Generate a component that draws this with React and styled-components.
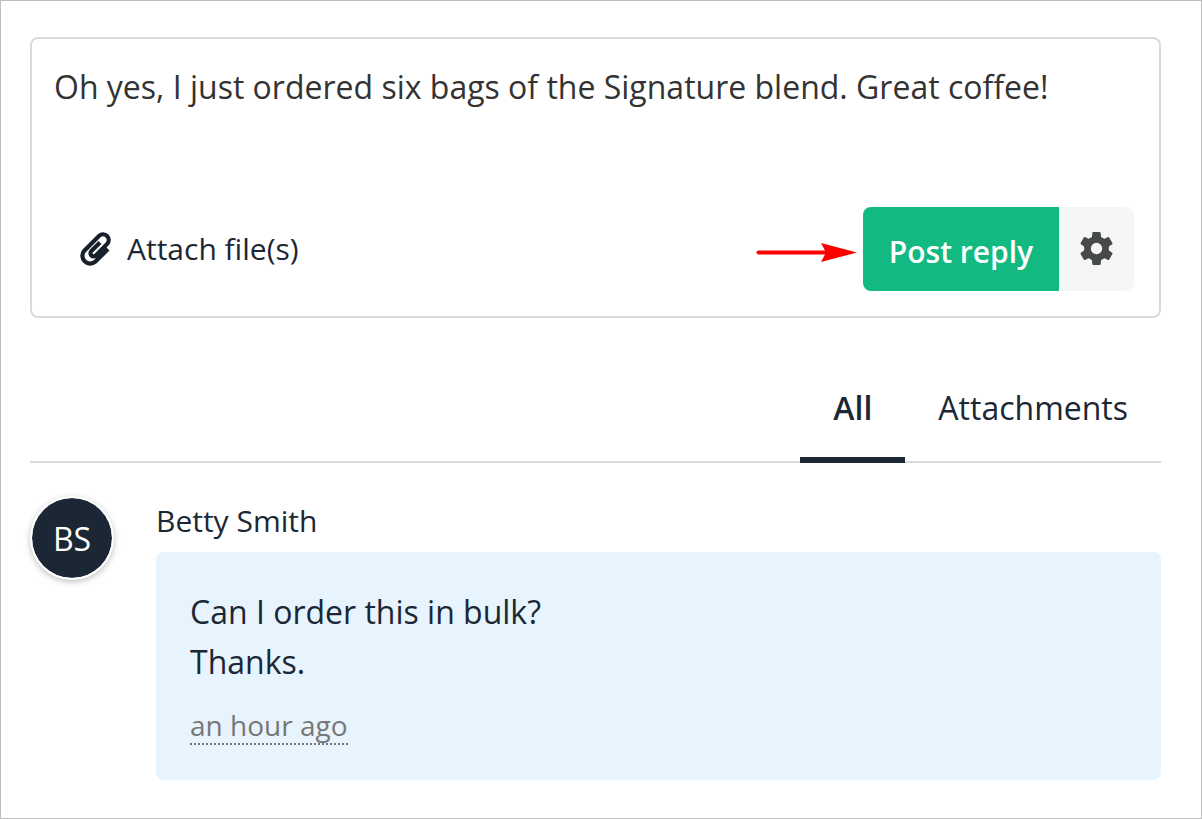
import React from "react";
import styled, { createGlobalStyle } from "styled-components";

const GlobalStyle = createGlobalStyle`
  *, *::before, *::after { box-sizing: border-box; }
  body {
    margin: 0;
    background: #fff;
    color: #1c2735;
    font-family: "Open Sans", "Noto Sans", sans-serif;
  }
  button, textarea { font: inherit; color: inherit; margin: 0; }
`;

const Page = styled.main`
  min-height: 100vh;
  padding: 36px 40px 38px 29px;
  border: 1px solid #bebebe;
`;

const Composer = styled.form`
  display: flex;
  flex-direction: column;
  border: 2px solid #dadada;
  border-radius: 8px;
`;

const ReplyBox = styled.textarea`
  display: block;
  width: 100%;
  height: 168px;
  padding: 23px 22px;
  border: 0;
  outline: 0;
  resize: none;
  overflow: hidden;
  background: transparent;
  color: #333;
  font-size: 32px;
  line-height: 50px;
`;

const ComposerFooter = styled.div`
  display: flex;
  align-items: center;
  padding: 0 25px 25px 48px;
`;

const AttachButton = styled.button`
  display: flex;
  align-items: center;
  gap: 16px;
  margin-right: auto;
  padding: 0;
  border: 0;
  background: none;
  font-size: 30px;
  line-height: 44px;
`;

const Arrow = styled.svg`
  flex: none;
  margin: 6px 6px 0 0;
`;

const PostButton = styled.button`
  height: 84px;
  width: 196px;
  padding: 4px 0 0;
  border: 0;
  border-radius: 8px 0 0 8px;
  background: #12b981;
  color: #fff;
  font-size: 30px;
  font-weight: 600;
  white-space: nowrap;
`;

const SettingsButton = styled.button`
  display: flex;
  align-items: center;
  justify-content: center;
  height: 84px;
  width: 75px;
  padding: 0 0 2px;
  border: 0;
  border-radius: 0 8px 8px 0;
  background: #f5f6f8;
  color: #484a4a;
`;

const Tabs = styled.div`
  display: flex;
  justify-content: flex-end;
  margin-top: 65px;
  box-shadow: inset 0 -2px #dadada;
`;

const Tab = styled.button`
  padding: 0 33px 24px;
  border: 0;
  border-bottom: 6px solid ${(p) => (p.$active ? "#1c2735" : "transparent")};
  background: none;
  font-size: 32px;
  line-height: 50px;
  font-weight: ${(p) => (p.$active ? 600 : 400)};
`;

const Comment = styled.article`
  display: flex;
  align-items: flex-start;
  gap: 42px;
  margin-top: 33px;
`;

const Avatar = styled.div`
  display: flex;
  flex: none;
  align-items: center;
  justify-content: center;
  width: 84px;
  height: 84px;
  border: 2px solid #fff;
  border-radius: 50%;
  background: #1c2735;
  background-clip: padding-box;
  box-shadow: 0 2px 6px rgba(0, 0, 0, 0.25);
  color: #fff;
  font-size: 32px;
`;

const CommentBody = styled.div`
  flex: 1;
  min-width: 0;
`;

const Author = styled.div`
  padding: 3px 0 9px;
  font-size: 30px;
  line-height: 44px;
`;

const Bubble = styled.div`
  padding: 35px 34px;
  border-radius: 8px;
  background: #e7f4fd;
`;

const Message = styled.p`
  margin: 0;
  font-size: 32px;
  line-height: 50px;
`;

const Timestamp = styled.time`
  display: inline-block;
  margin-top: 20px;
  border-bottom: 2px dotted #777;
  color: #777;
  font-size: 28px;
  line-height: 36px;
  vertical-align: top;
`;

const PaperclipIcon = () => (
  <svg width="31" height="34" viewBox="0 0 31 34" fill="none" aria-hidden="true">
    <path
      d="M28 17.1L15.3 29.7A7.8 7.8 0 0 1 4.3 18.7L19.2 3.8A5.7 5.7 0 0 1 27.2 11.9L15.8 23.4A3.1 3.1 0 0 1 11.4 19L20 10.4"
      stroke="#17202c"
      strokeWidth="4.2"
    />
  </svg>
);

const GearIcon = () => (
  <svg width="33" height="33" viewBox="0 0 32 32" aria-hidden="true">
    <circle cx="16" cy="16" r="8.7" fill="none" stroke="currentColor" strokeWidth="6.4" />
    {[0, 60, 120, 180, 240, 300].map((angle) => (
      <path
        key={angle}
        d="M10.2 6.6L11.6 4.6L12 .8Q12.1 0 13 0H19Q19.9 0 20 .8L20.4 4.6L21.8 6.6L18 8H14Z"
        fill="currentColor"
        transform={`rotate(${angle} 16 16)`}
      />
    ))}
  </svg>
);

export default function App() {
  return (
    <>
      <GlobalStyle />
      <Page>
        <Composer onSubmit={(e) => e.preventDefault()}>
          <ReplyBox
            aria-label="Reply"
            defaultValue="Oh yes, I just ordered six bags of the Signature blend. Great coffee!"
          />
          <ComposerFooter>
            <AttachButton type="button">
              <PaperclipIcon />
              Attach file(s)
            </AttachButton>
            <Arrow width="101" height="20" viewBox="0 0 101 20" aria-hidden="true">
              <path d="M2.5 10.5H75" stroke="#f00" strokeWidth="4" strokeLinecap="round" />
              <path d="M101 10.5L65 1L70 10.5L65 20Z" fill="#f00" />
            </Arrow>
            <PostButton type="submit">Post reply</PostButton>
            <SettingsButton type="button" aria-label="Reply settings">
              <GearIcon />
            </SettingsButton>
          </ComposerFooter>
        </Composer>

        <Tabs role="tablist">
          <Tab type="button" role="tab" aria-selected="true" $active>All</Tab>
          <Tab type="button" role="tab" aria-selected="false">Attachments</Tab>
        </Tabs>

        <Comment>
          <Avatar aria-hidden="true">BS</Avatar>
          <CommentBody>
            <Author>Betty Smith</Author>
            <Bubble>
              <Message>
                Can I order this in bulk?
                <br />
                Thanks.
              </Message>
              <Timestamp>an hour ago</Timestamp>
            </Bubble>
          </CommentBody>
        </Comment>
      </Page>
    </>
  );
}
